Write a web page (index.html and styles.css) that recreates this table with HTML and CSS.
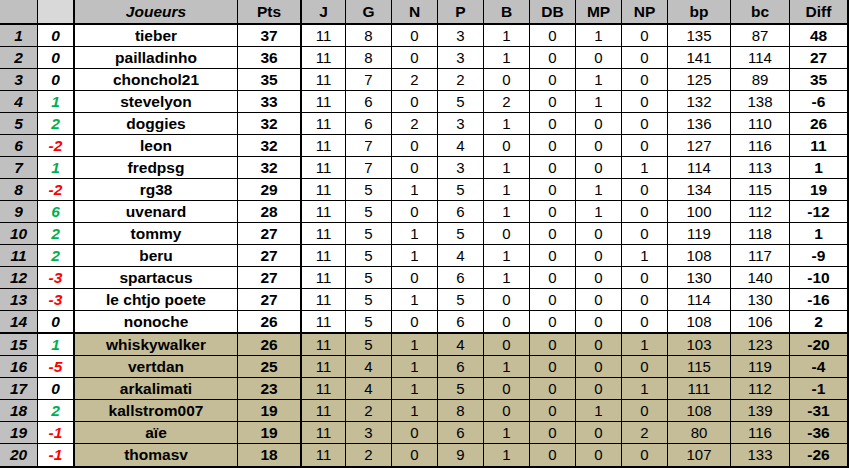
FILE: index.html
```html
<!DOCTYPE html>
<html lang="fr">
<head>
<meta charset="utf-8">
<title>Classement</title>
<link rel="stylesheet" href="styles.css">
</head>
<body>
<div class="board">
  <div class="row head">
    <div class="c rk"></div><div class="c mv"></div><div class="c nm"><i>Joueurs</i></div><div class="c pts">Pts</div>
    <div class="c n">J</div><div class="c n">G</div><div class="c n">N</div><div class="c n">P</div><div class="c n">B</div><div class="c n">DB</div><div class="c n">MP</div><div class="c n">NP</div>
    <div class="c n">bp</div><div class="c n">bc</div><div class="c df">Diff</div>
  </div>
  <div class="row"><div class="c rk">1</div><div class="c mv">0</div><div class="c nm">tieber</div><div class="c pts">37</div><div class="c n">11</div><div class="c n">8</div><div class="c n">0</div><div class="c n">3</div><div class="c n">1</div><div class="c n">0</div><div class="c n">1</div><div class="c n">0</div><div class="c n">135</div><div class="c n">87</div><div class="c df">48</div></div>
  <div class="row"><div class="c rk">2</div><div class="c mv">0</div><div class="c nm">pailladinho</div><div class="c pts">36</div><div class="c n">11</div><div class="c n">8</div><div class="c n">0</div><div class="c n">3</div><div class="c n">1</div><div class="c n">0</div><div class="c n">0</div><div class="c n">0</div><div class="c n">141</div><div class="c n">114</div><div class="c df">27</div></div>
  <div class="row"><div class="c rk">3</div><div class="c mv">0</div><div class="c nm">chonchol21</div><div class="c pts">35</div><div class="c n">11</div><div class="c n">7</div><div class="c n">2</div><div class="c n">2</div><div class="c n">0</div><div class="c n">0</div><div class="c n">1</div><div class="c n">0</div><div class="c n">125</div><div class="c n">89</div><div class="c df">35</div></div>
  <div class="row"><div class="c rk">4</div><div class="c mv up">1</div><div class="c nm">stevelyon</div><div class="c pts">33</div><div class="c n">11</div><div class="c n">6</div><div class="c n">0</div><div class="c n">5</div><div class="c n">2</div><div class="c n">0</div><div class="c n">1</div><div class="c n">0</div><div class="c n">132</div><div class="c n">138</div><div class="c df">-6</div></div>
  <div class="row"><div class="c rk">5</div><div class="c mv up">2</div><div class="c nm">doggies</div><div class="c pts">32</div><div class="c n">11</div><div class="c n">6</div><div class="c n">2</div><div class="c n">3</div><div class="c n">1</div><div class="c n">0</div><div class="c n">0</div><div class="c n">0</div><div class="c n">136</div><div class="c n">110</div><div class="c df">26</div></div>
  <div class="row"><div class="c rk">6</div><div class="c mv down">-2</div><div class="c nm">leon</div><div class="c pts">32</div><div class="c n">11</div><div class="c n">7</div><div class="c n">0</div><div class="c n">4</div><div class="c n">0</div><div class="c n">0</div><div class="c n">0</div><div class="c n">0</div><div class="c n">127</div><div class="c n">116</div><div class="c df">11</div></div>
  <div class="row"><div class="c rk">7</div><div class="c mv up">1</div><div class="c nm">fredpsg</div><div class="c pts">32</div><div class="c n">11</div><div class="c n">7</div><div class="c n">0</div><div class="c n">3</div><div class="c n">1</div><div class="c n">0</div><div class="c n">0</div><div class="c n">1</div><div class="c n">114</div><div class="c n">113</div><div class="c df">1</div></div>
  <div class="row"><div class="c rk">8</div><div class="c mv down">-2</div><div class="c nm">rg38</div><div class="c pts">29</div><div class="c n">11</div><div class="c n">5</div><div class="c n">1</div><div class="c n">5</div><div class="c n">1</div><div class="c n">0</div><div class="c n">1</div><div class="c n">0</div><div class="c n">134</div><div class="c n">115</div><div class="c df">19</div></div>
  <div class="row"><div class="c rk">9</div><div class="c mv up">6</div><div class="c nm">uvenard</div><div class="c pts">28</div><div class="c n">11</div><div class="c n">5</div><div class="c n">0</div><div class="c n">6</div><div class="c n">1</div><div class="c n">0</div><div class="c n">1</div><div class="c n">0</div><div class="c n">100</div><div class="c n">112</div><div class="c df">-12</div></div>
  <div class="row"><div class="c rk">10</div><div class="c mv up">2</div><div class="c nm">tommy</div><div class="c pts">27</div><div class="c n">11</div><div class="c n">5</div><div class="c n">1</div><div class="c n">5</div><div class="c n">0</div><div class="c n">0</div><div class="c n">0</div><div class="c n">0</div><div class="c n">119</div><div class="c n">118</div><div class="c df">1</div></div>
  <div class="row"><div class="c rk">11</div><div class="c mv up">2</div><div class="c nm">beru</div><div class="c pts">27</div><div class="c n">11</div><div class="c n">5</div><div class="c n">1</div><div class="c n">4</div><div class="c n">1</div><div class="c n">0</div><div class="c n">0</div><div class="c n">1</div><div class="c n">108</div><div class="c n">117</div><div class="c df">-9</div></div>
  <div class="row"><div class="c rk">12</div><div class="c mv down">-3</div><div class="c nm">spartacus</div><div class="c pts">27</div><div class="c n">11</div><div class="c n">5</div><div class="c n">0</div><div class="c n">6</div><div class="c n">1</div><div class="c n">0</div><div class="c n">0</div><div class="c n">0</div><div class="c n">130</div><div class="c n">140</div><div class="c df">-10</div></div>
  <div class="row"><div class="c rk">13</div><div class="c mv down">-3</div><div class="c nm">le chtjo poete</div><div class="c pts">27</div><div class="c n">11</div><div class="c n">5</div><div class="c n">1</div><div class="c n">5</div><div class="c n">0</div><div class="c n">0</div><div class="c n">0</div><div class="c n">0</div><div class="c n">114</div><div class="c n">130</div><div class="c df">-16</div></div>
  <div class="row sep"><div class="c rk">14</div><div class="c mv">0</div><div class="c nm">nonoche</div><div class="c pts">26</div><div class="c n">11</div><div class="c n">5</div><div class="c n">0</div><div class="c n">6</div><div class="c n">0</div><div class="c n">0</div><div class="c n">0</div><div class="c n">0</div><div class="c n">108</div><div class="c n">106</div><div class="c df">2</div></div>
  <div class="row low"><div class="c rk">15</div><div class="c mv up">1</div><div class="c nm">whiskywalker</div><div class="c pts">26</div><div class="c n">11</div><div class="c n">5</div><div class="c n">1</div><div class="c n">4</div><div class="c n">0</div><div class="c n">0</div><div class="c n">0</div><div class="c n">1</div><div class="c n">103</div><div class="c n">123</div><div class="c df">-20</div></div>
  <div class="row low"><div class="c rk">16</div><div class="c mv down">-5</div><div class="c nm">vertdan</div><div class="c pts">25</div><div class="c n">11</div><div class="c n">4</div><div class="c n">1</div><div class="c n">6</div><div class="c n">1</div><div class="c n">0</div><div class="c n">0</div><div class="c n">0</div><div class="c n">115</div><div class="c n">119</div><div class="c df">-4</div></div>
  <div class="row low"><div class="c rk">17</div><div class="c mv">0</div><div class="c nm">arkalimati</div><div class="c pts">23</div><div class="c n">11</div><div class="c n">4</div><div class="c n">1</div><div class="c n">5</div><div class="c n">0</div><div class="c n">0</div><div class="c n">0</div><div class="c n">1</div><div class="c n">111</div><div class="c n">112</div><div class="c df">-1</div></div>
  <div class="row low"><div class="c rk">18</div><div class="c mv up">2</div><div class="c nm">kallstrom007</div><div class="c pts">19</div><div class="c n">11</div><div class="c n">2</div><div class="c n">1</div><div class="c n">8</div><div class="c n">0</div><div class="c n">0</div><div class="c n">1</div><div class="c n">0</div><div class="c n">108</div><div class="c n">139</div><div class="c df">-31</div></div>
  <div class="row low"><div class="c rk">19</div><div class="c mv down">-1</div><div class="c nm">aïe</div><div class="c pts">19</div><div class="c n">11</div><div class="c n">3</div><div class="c n">0</div><div class="c n">6</div><div class="c n">1</div><div class="c n">0</div><div class="c n">0</div><div class="c n">2</div><div class="c n">80</div><div class="c n">116</div><div class="c df">-36</div></div>
  <div class="row low last"><div class="c rk">20</div><div class="c mv down">-1</div><div class="c nm">thomasv</div><div class="c pts">18</div><div class="c n">11</div><div class="c n">2</div><div class="c n">0</div><div class="c n">9</div><div class="c n">1</div><div class="c n">0</div><div class="c n">0</div><div class="c n">0</div><div class="c n">107</div><div class="c n">133</div><div class="c df">-26</div></div>
</div>
</body>
</html>
```

FILE: styles.css
```css
* { box-sizing: border-box; }
html, body { margin: 0; padding: 0; background: #fff; }
body {
  font-family: "Liberation Sans", Arial, sans-serif;
  font-size: 15px;
  color: #000;
}
.board {
  width: 849px;
  display: flex;
  flex-direction: column;
}
.row {
  display: grid;
  grid-template-columns: 38px 37px 163px 64px 44px repeat(7, 46px) 63px 59px 59px;
  height: 22px;
}
.row.head { height: 25px; }
.row.sep { height: 23px; }
.row.last { height: 24px; }
.c {
  display: flex;
  align-items: center;
  justify-content: center;
  border-right: 1px solid #000;
  border-bottom: 1px solid #000;
  background: #fff;
  white-space: nowrap;
  line-height: 18px;
  font-size: 15px;
}
.head .c { border-bottom-width: 2px; background: #c0c0c0; font-weight: bold; font-size: 15.5px; }
.head .mv { background: #d9d9d9; }
.sep .c, .last .c { border-bottom-width: 2px; }
.rk { background: #c0c0c0; font-weight: bold; font-style: italic; }
.c.rk, .c.mv, .c.nm, .c.pts, .c.df { font-size: 15.5px; }
.mv { border-right-width: 2px; font-weight: bold; font-style: italic; }
.mv.up { color: #00b050; }
.mv.down { color: #ff0000; }
.nm { font-weight: bold; }
.pts { font-weight: bold; border-right-width: 2px; }
.df { font-weight: bold; border-right-width: 2px; }
.low .nm, .low .pts, .low .n, .low .df { background: #c4bd97; }
```
